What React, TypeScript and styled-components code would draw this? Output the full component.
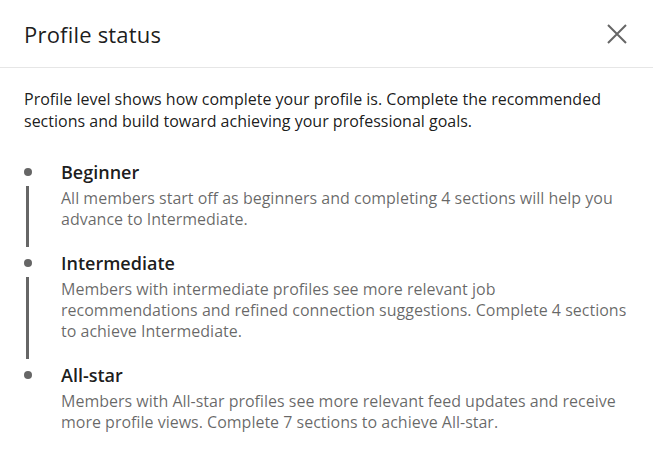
import React from "react";
import styled, { createGlobalStyle } from "styled-components";

const Global = createGlobalStyle`
  html, body { margin: 0; padding: 0; background: #fff; }
  body { font-family: "Open Sans", "Noto Sans", sans-serif; }
`;

const Dialog = styled.div`
  width: 653px;
  height: 457px;
  background: #fff;
  box-sizing: border-box;
`;

const Header = styled.header`
  height: 68px;
  box-sizing: border-box;
  display: flex;
  align-items: center;
  justify-content: space-between;
  padding: 0 24px 0 24px;
  border-bottom: 1px solid #e6e6e6;
`;

const Title = styled.h2`
  margin: 0;
  font-size: 22px;
  font-weight: 400;
  color: rgba(0, 0, 0, 0.9);
  letter-spacing: 0.2px;
`;

const CloseButton = styled.button`
  width: 24px;
  height: 24px;
  border: 0;
  padding: 0;
  background: none;
  display: flex;
  align-items: center;
  justify-content: center;
  cursor: pointer;
`;

const Body = styled.div`
  padding: 20px 24px 0 24px;
`;

const Intro = styled.p`
  margin: 0 0 27px 0;
  font-size: 16px;
  line-height: 22px;
  color: rgba(0, 0, 0, 0.9);
`;

const Levels = styled.ol`
  list-style: none;
  margin: 0;
  padding: 0;
`;

const Level = styled.li`
  display: grid;
  grid-template-columns: 37px 1fr;
`;

const Marker = styled.div`
  display: flex;
  flex-direction: column;
  align-items: flex-start;
  padding: 9px 0 3px 0;
`;

const Dot = styled.span`
  width: 8px;
  height: 8px;
  border-radius: 50%;
  background: #666;
`;

const Line = styled.span`
  width: 3px;
  flex: 1;
  margin: 10px 0 0 2px;
  background: #666;
`;

const Content = styled.div<{ $last?: boolean }>`
  padding-bottom: ${(p) => (p.$last ? "0" : "20px")};
`;

const LevelName = styled.h3`
  margin: 0;
  font-size: 18px;
  line-height: 27px;
  font-weight: 600;
  color: rgba(0, 0, 0, 0.9);
`;

const LevelDesc = styled.p`
  margin: 0;
  padding-top: 2px;
  font-size: 16px;
  line-height: 21px;
  color: rgba(0, 0, 0, 0.6);
`;

const levels = [
  {
    name: "Beginner",
    lines: [
      "All members start off as beginners and completing 4 sections will help you",
      "advance to Intermediate.",
    ],
  },
  {
    name: "Intermediate",
    lines: [
      "Members with intermediate profiles see more relevant job",
      "recommendations and refined connection suggestions. Complete 4 sections",
      "to achieve Intermediate.",
    ],
  },
  {
    name: "All-star",
    lines: [
      "Members with All-star profiles see more relevant feed updates and receive",
      "more profile views. Complete 7 sections to achieve All-star.",
    ],
  },
];

export default function App() {
  return (
    <Dialog>
      <Global />
      <Header>
        <Title>Profile status</Title>
        <CloseButton aria-label="Dismiss">
          <svg width="20" height="20" viewBox="0 0 20 20">
            <path d="M1 1 L19 19 M19 1 L1 19" stroke="#666" strokeWidth="2" fill="none" />
          </svg>
        </CloseButton>
      </Header>
      <Body>
        <Intro>
          Profile level shows how complete your profile is. Complete the recommended
          <br />
          sections and build toward achieving your professional goals.
        </Intro>
        <Levels>
          {levels.map((l, i) => {
            const last = i === levels.length - 1;
            return (
              <Level key={l.name}>
                <Marker>
                  <Dot />
                  {!last && <Line />}
                </Marker>
                <Content $last={last}>
                  <LevelName>{l.name}</LevelName>
                  <LevelDesc>
                    {l.lines.map((t, j) => (
                      <React.Fragment key={j}>
                        {t}
                        {j < l.lines.length - 1 && <br />}
                      </React.Fragment>
                    ))}
                  </LevelDesc>
                </Content>
              </Level>
            );
          })}
        </Levels>
      </Body>
    </Dialog>
  );
}
